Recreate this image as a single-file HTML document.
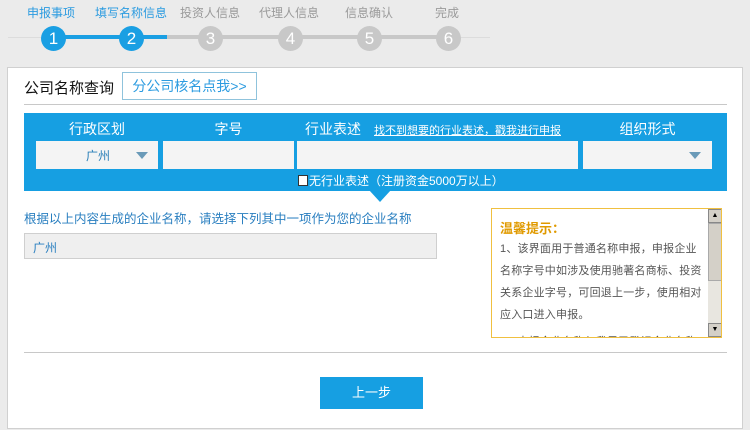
<!DOCTYPE html>
<html><head><meta charset="utf-8"><style>
*{margin:0;padding:0;box-sizing:border-box}
body{width:750px;height:430px;background:#ebebeb;font-family:"Liberation Sans","Noto Sans CJK SC",sans-serif;position:relative;overflow:hidden;font-size:12px}
.a{position:absolute}
.lbl{top:4px;font-size:12px;color:#9a9a9a;width:90px;text-align:center;margin-left:-45px}
.c{top:26px;width:25px;height:25px;border-radius:50%;background:#c8c8c8;color:#fff;font-size:17px;text-align:center;line-height:25px;margin-left:-12px}
.in{top:141px;height:28px;background:#f4f4f4}
.wl{top:119px;color:#fff;font-size:14px;text-align:center}
.tri{width:0;height:0;border-left:6px solid transparent;border-right:6px solid transparent;border-top:7px solid #6a9ab8}
</style></head><body>
<div class="a" style="left:8px;top:37px;width:482px;height:1px;background:#dcdcdc"></div>
<div class="a" style="left:55px;top:35px;width:112px;height:4px;background:#1a9fe3"></div>
<div class="a" style="left:167px;top:35px;width:280px;height:4px;background:#c8c8c8"></div>
<div class="a lbl" style="left:51px;color:#2b9be0">申报事项</div>
<div class="a lbl" style="left:131px;color:#2b9be0">填写名称信息</div>
<div class="a lbl" style="left:210px">投资人信息</div>
<div class="a lbl" style="left:289px">代理人信息</div>
<div class="a lbl" style="left:369px">信息确认</div>
<div class="a lbl" style="left:447px">完成</div>
<div class="a c" style="left:53px;background:#1a9fe3">1</div>
<div class="a c" style="left:131px;background:#1a9fe3">2</div>
<div class="a c" style="left:210px">3</div>
<div class="a c" style="left:290px">4</div>
<div class="a c" style="left:369px">5</div>
<div class="a c" style="left:448px">6</div>

<div class="a" style="left:7px;top:67px;width:736px;height:362px;background:#fff;border:1px solid #d0d0d0"></div>
<div class="a" style="left:24px;top:77px;font-size:15px;color:#111">公司名称查询</div>
<div class="a" style="left:122px;top:72px;width:135px;height:28px;border:1px solid #8fc3dc;color:#2b9be0;font-size:14px;line-height:26px;text-align:center">分公司核名点我&gt;&gt;</div>
<div class="a" style="left:24px;top:104px;width:703px;height:1px;background:#c8c8c8"></div>

<div class="a" style="left:24px;top:113px;width:703px;height:78px;background:#169fe2"></div>
<div class="a wl" style="left:36px;width:122px">行政区划</div>
<div class="a wl" style="left:163px;width:131px">字号</div>
<div class="a wl" style="left:297px;width:72px">行业表述</div>
<div class="a" style="left:374px;top:122px;color:#fff;font-size:11px;text-decoration:underline">找不到想要的行业表述，戳我进行申报</div>
<div class="a wl" style="left:583px;width:129px">组织形式</div>
<div class="a in" style="left:36px;width:122px"><span class="a" style="left:50px;top:6px;color:#2a7fb8;font-size:12px">广州</span><span class="a tri" style="left:100px;top:11px"></span></div>
<div class="a in" style="left:163px;width:131px"></div>
<div class="a in" style="left:297px;width:281px"></div>
<div class="a in" style="left:583px;width:129px"><span class="a tri" style="left:106px;top:11px"></span></div>
<div class="a" style="left:298px;top:175px;width:10px;height:11px;background:#fff;border:1px solid #333"></div>
<div class="a" style="left:309px;top:172px;color:#fff;font-size:12px">无行业表述（注册资金5000万以上）</div>
<div class="a" style="left:369px;top:190px;width:0;height:0;border-left:11px solid transparent;border-right:11px solid transparent;border-top:12px solid #169fe2"></div>

<div class="a" style="left:24px;top:208px;color:#2a7fc0;font-size:12.5px">根据以上内容生成的企业名称，请选择下列其中一项作为您的企业名称</div>
<div class="a" style="left:24px;top:233px;width:413px;height:26px;background:#efefef;border:1px solid #cfcfcf;color:#2a7fc0;padding:5px 8px;font-size:12px">广州</div>

<div class="a" style="left:491px;top:208px;width:231px;height:130px;border:1px solid #f0c040;overflow:hidden">
<div class="a" style="left:8px;top:9px;color:#e09a00;font-size:13px;font-weight:bold">温馨提示：</div>
<div class="a" style="left:8px;top:29px;width:210px;color:#555;font-size:11px;line-height:22px;letter-spacing:0.2px">1、该界面用于普通名称申报，申报企业<br>名称字号中如涉及使用驰著名商标、投资<br>关系企业字号，可回退上一步，使用相对<br>应入口进入申报。<div style="height:5px"></div>2、申报企业名称与我局已登记企业名称</div>
<div class="a" style="left:216px;top:0;width:14px;height:128px;background:#e8e6e0"></div>
<div class="a" style="left:216px;top:14px;width:14px;height:58px;background:#d4d0c8;border:1px solid #aaa"></div>
<div class="a" style="left:216px;top:0;width:14px;height:14px;background:#d4d0c8;border:1px solid #888;font-size:7px;text-align:center;line-height:12px">▲</div>
<div class="a" style="left:216px;top:114px;width:14px;height:14px;background:#d4d0c8;border:1px solid #888;font-size:7px;text-align:center;line-height:12px">▼</div>
</div>

<div class="a" style="left:24px;top:352px;width:703px;height:1px;background:#c8c8c8"></div>
<div class="a" style="left:320px;top:377px;width:103px;height:32px;background:#169fe2;color:#fff;font-size:13px;text-align:center;line-height:32px">上一步</div>
</body></html>
